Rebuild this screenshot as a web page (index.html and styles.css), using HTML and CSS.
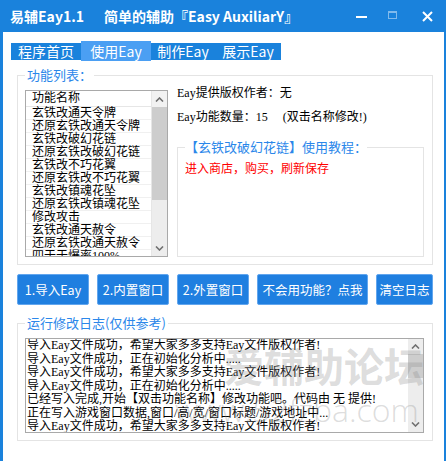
FILE: index.html
```html
<!DOCTYPE html>
<html lang="zh-CN">

<head>
    <meta charset="UTF-8">
    <meta name="viewport" content="width=device-width, initial-scale=1.0">
    <title>易辅Eay1.1</title>
    <link rel="stylesheet" href="styles.css">
</head>

<body>
    <div class="window">
        <!-- 标题栏 -->
        <div class="titlebar">
            <span class="app-name">易辅Eay1.1</span>
            <span class="app-desc">简单的辅助『Easy AuxiliarY』</span>
            <div class="win-btns">
                <span class="wbtn"><i class="min-line"></i></span>
                <span class="wbtn"><i class="max-box"></i></span>
                <span class="wbtn">
                    <svg width="11" height="11" viewBox="0 0 11 11"><path d="M1 1L10 10M10 1L1 10" stroke="#fff" stroke-width="2"/></svg>
                </span>
            </div>
        </div>

        <div class="content">
            <!-- 选项卡 -->
            <div class="tabs">
                <span class="tab tab-home">程序首页</span>
                <span class="tab tab-use active">使用Eay</span>
                <span class="tab tab-make">制作Eay</span>
                <span class="tab tab-show">展示Eay</span>
            </div>

            <!-- 功能列表 -->
            <fieldset class="group func-group">
                <legend>功能列表：</legend>
                <div class="func-body">
                    <div class="listbox">
                        <div class="list-col">
                            <div class="list-head">功能名称</div>
                            <div class="list-row">玄铁改通天令牌</div>
                            <div class="list-row">还原玄铁改通天令牌</div>
                            <div class="list-row">玄铁改破幻花链</div>
                            <div class="list-row">还原玄铁改破幻花链</div>
                            <div class="list-row">玄铁改不巧花翼</div>
                            <div class="list-row">还原玄铁改不巧花翼</div>
                            <div class="list-row">玄铁改镇魂花坠</div>
                            <div class="list-row">还原玄铁改镇魂花坠</div>
                            <div class="list-row">修改攻击</div>
                            <div class="list-row">玄铁改通天赦令</div>
                            <div class="list-row">还原玄铁改通天赦令</div>
                            <div class="list-row">四于于爆率100%</div>
                        </div>
                        <div class="scrollbar list-scroll">
                            <div class="sb-arrow sb-up-head">
                                <svg width="9" height="5" viewBox="0 0 9 5"><path d="M1 4.5L4.5 1L8 4.5" fill="none" stroke="#707070" stroke-width="1.6"/></svg>
                            </div>
                            <div class="sb-thumb list-thumb"></div>
                            <div class="sb-track"></div>
                            <div class="sb-arrow">
                                <svg width="9" height="5" viewBox="0 0 9 5"><path d="M1 0.5L4.5 4L8 0.5" fill="none" stroke="#707070" stroke-width="1.6"/></svg>
                            </div>
                        </div>
                    </div>

                    <div class="info">
                        <div class="info-line">Eay提供版权作者：无</div>
                        <div class="info-line second">Eay功能数量：15<span class="hint">(双击名称修改!)</span></div>
                        <fieldset class="group tutorial">
                            <legend>【玄铁改破幻花链】使用教程：</legend>
                            <p class="tutorial-text">进入商店，购买，刷新保存</p>
                        </fieldset>
                    </div>
                </div>
            </fieldset>

            <!-- 操作按钮 -->
            <div class="buttons">
                <button class="btn btn-s">1.导入Eay</button>
                <button class="btn btn-s">2.内置窗口</button>
                <button class="btn btn-s">2.外置窗口</button>
                <button class="btn btn-l">不会用功能？点我</button>
                <button class="btn btn-xs">清空日志</button>
            </div>

            <!-- 运行日志 -->
            <fieldset class="group log-group">
                <legend>运行修改日志(仅供参考)</legend>
                <div class="logbox">
                    <div class="log-text">
                        <div>导入Eay文件成功，希望大家多多支持Eay文件版权作者!</div>
                        <div>导入Eay文件成功，正在初始化分析中.....</div>
                        <div>导入Eay文件成功，希望大家多多支持Eay文件版权作者!</div>
                        <div>导入Eay文件成功，正在初始化分析中.....</div>
                        <div>已经写入完成,开始【双击功能名称】修改功能吧。代码由 无 提供!</div>
                        <div>正在写入游戏窗口数据,窗口/高/宽/窗口标题/游戏地址中...</div>
                        <div>导入Eay文件成功，希望大家多多支持Eay文件版权作者!</div>
                        <div>导入Eay文件成功，正在初始化分析中.....</div>
                    </div>
                    <div class="scrollbar log-scroll">
                        <div class="sb-arrow">
                            <svg width="9" height="5" viewBox="0 0 9 5"><path d="M1 4.5L4.5 1L8 4.5" fill="none" stroke="#707070" stroke-width="1.6"/></svg>
                        </div>
                        <div class="sb-thumb log-thumb"></div>
                        <div class="sb-track"></div>
                        <div class="sb-arrow">
                            <svg width="9" height="5" viewBox="0 0 9 5"><path d="M1 0.5L4.5 4L8 0.5" fill="none" stroke="#707070" stroke-width="1.6"/></svg>
                        </div>
                    </div>
                </div>
            </fieldset>
        </div>

        <!-- 水印 -->
        <div class="watermark">
            <div class="wm-title">爱辅助论坛</div>
            <div class="wm-url">www.52fzba.com</div>
        </div>
    </div>
</body>

</html>
```

FILE: styles.css
```css
body {
    margin: 0;
    background-color: #ffffff;
    font-family: "Noto Sans CJK SC", sans-serif;
}

.window {
    position: relative;
    width: 446px;
    height: 461px;
    box-sizing: border-box;
    border-left: 3px solid #1a82dc;
    border-right: 2px solid #1a82dc;
    background-color: #ffffff;
    overflow: hidden;
}

/* 标题栏 */
.titlebar {
    display: flex;
    align-items: center;
    height: 32px;
    padding-left: 7px;
    background-color: #1a82dc;
    color: #ffffff;
    font-size: 14px;
    font-weight: 700;
}

.app-name {
    width: 94px;
}

.win-btns {
    display: flex;
    margin-left: auto;
    height: 32px;
}

.wbtn {
    display: flex;
    align-items: center;
    justify-content: center;
    width: 34px;
}

.wbtn:nth-child(2) {
    width: 32px;
    padding-right: 4px;
    box-sizing: border-box;
}

.min-line {
    display: block;
    width: 11px;
    height: 2px;
    background-color: #ffffff;
    margin-top: 1px;
}

.max-box {
    display: block;
    width: 7px;
    height: 5px;
    border: 1px solid rgba(255, 255, 255, 0.45);
    border-top-width: 2px;
    margin-top: -2px;
}

/* 选项卡 */
.tabs {
    display: flex;
    width: 270px;
    height: 17px;
    margin: 11px 0 0 8px;
    background-color: #1a82dc;
}

.tab {
    color: #ffffff;
    font-size: 14px;
    line-height: 17px;
    text-align: center;
}

.tab-home { width: 70px; }
.tab-use { width: 70px; }
.tab-make { width: 64px; }
.tab-show { width: 66px; }

.tab.active {
    background-color: #4b9ff3;
    margin-top: -2px;
    margin-bottom: -1px;
    padding-top: 2px;
}

/* 分组框 */
.group {
    border: 1px solid #e4e4e4;
    min-width: 0;
}

.group legend {
    padding: 0 2px;
    color: #2b87ea;
    font-size: 13px;
    line-height: 14px;
}

.func-group {
    margin: 8px 11px 0 14px;
    padding: 4px 8px 7px 7px;
}

.func-body {
    display: flex;
}

/* 宋体风格的文字 */
.list-col,
.info-line,
.log-text {
    font-family: "Liberation Serif", "Noto Sans CJK SC", serif;
}

/* 列表框 */
.listbox {
    display: flex;
    width: 143px;
    height: 167px;
    margin-top: 4px;
    box-sizing: border-box;
    border: 1px solid #a9a9a9;
    overflow: hidden;
}

.list-col {
    flex: 1;
    overflow: hidden;
    font-size: 12px;
    color: #000000;
}

.list-head {
    height: 15px;
    line-height: 15px;
    padding-left: 6px;
    border-bottom: 1px solid #e6e6e6;
}

.list-row {
    height: 12px;
    line-height: 13px;
    padding-left: 6px;
    border-bottom: 1px solid #f0f0f0;
    white-space: nowrap;
}

.scrollbar {
    display: flex;
    flex-direction: column;
    width: 15px;
    background-color: #ededed;
}

.list-scroll {
    border-left: 1px solid #e6e6e6;
}

.sb-arrow {
    display: flex;
    align-items: center;
    justify-content: center;
    height: 15px;
}

.sb-up-head {
    height: 16px;
    background-color: #f2f2f2;
}

.sb-thumb {
    background-color: #cdcdcd;
}

.list-thumb {
    height: 93px;
}

.log-thumb {
    height: 24px;
}

.sb-track {
    flex: 1;
}

/* 右侧信息 */
.info {
    display: flex;
    flex-direction: column;
    flex: 1;
    margin-left: 9px;
    font-size: 12px;
    color: #000000;
}

.info-line {
    line-height: 14px;
}

.info-line.second {
    margin-top: 10px;
}

.hint {
    margin-left: 15px;
}

.tutorial {
    flex: 1;
    margin: 16px 0 0 0;
    padding: 0 7px;
}

.tutorial legend {
    padding: 0;
}

.tutorial-text {
    margin: 6px 0 0 0;
    color: #ff0000;
    font-size: 12px;
    line-height: 16px;
}

/* 按钮 */
.buttons {
    display: flex;
    gap: 8px;
    margin: 9px 11px 0 14px;
}

.btn {
    height: 31px;
    padding: 0;
    border: 1px solid #62a6ee;
    border-radius: 2px;
    background-color: #1f7fe0;
    color: #ffffff;
    font-family: "Noto Sans CJK SC", sans-serif;
    font-size: 12.5px;
}

.btn-s { width: 72px; }
.btn-l { width: 111px; }
.btn-xs { width: 57px; }

/* 日志 */
.log-group {
    margin: 11px 11px 0 14px;
    padding: 8px 8px 7px 7px;
}

.logbox {
    display: flex;
    height: 95px;
    box-sizing: border-box;
    border: 1px solid #a9a9a9;
    overflow: hidden;
}

.log-text {
    flex: 1;
    overflow: hidden;
    padding-left: 1px;
    font-size: 12px;
    line-height: 13.5px;
    color: #000000;
    white-space: nowrap;
}

/* 水印 */
.watermark {
    position: absolute;
    left: 172px;
    top: 342px;
    pointer-events: none;
    color: rgba(140, 140, 140, 0.3);
}

.wm-title {
    padding-left: 49px;
    font-size: 40px;
    font-weight: 700;
    line-height: 46px;
}

.wm-url {
    margin-top: 4px;
    font-family: "Open Sans", sans-serif;
    font-weight: 300;
    font-size: 32px;
    line-height: 36px;
}
```
